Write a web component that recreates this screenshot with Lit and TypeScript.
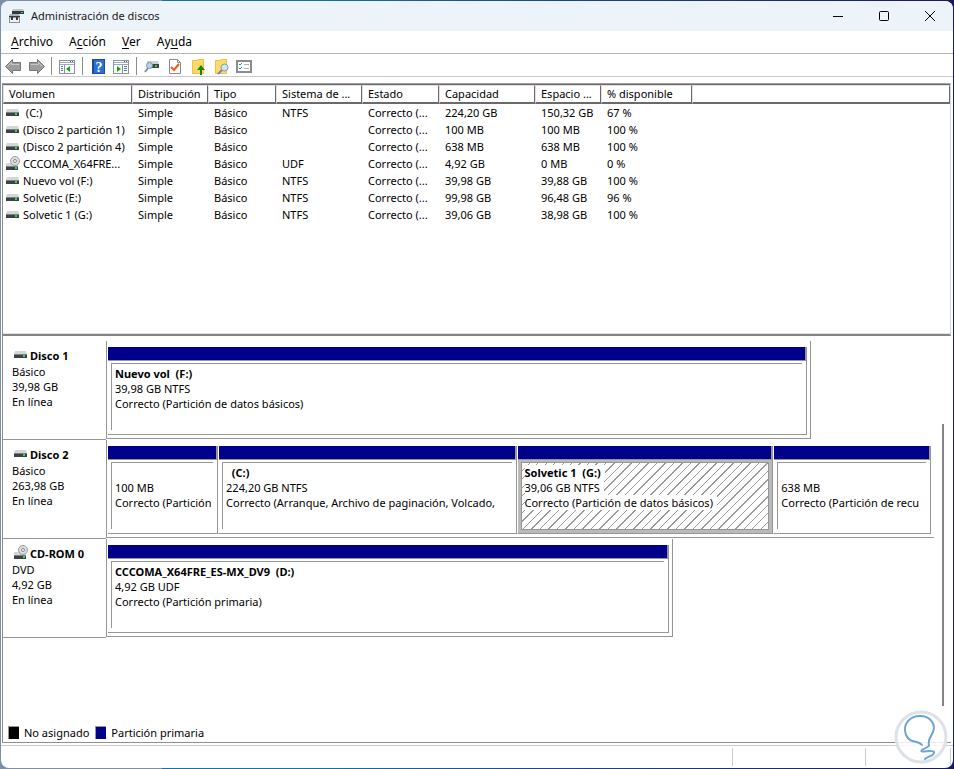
import { LitElement, html, css, svg, nothing } from "lit";
import { customElement, property, state } from "lit/decorators.js";
import { classMap } from "lit/directives/class-map.js";
import { styleMap } from "lit/directives/style-map.js";

type Kind = "disk" | "optical";

interface Volume {
  name: string;
  kind: Kind;
  fs: string;
  capacity: string;
  free: string;
  percent: string;
}

interface Partition {
  id: string;
  name: string;
  size: string;
  status: string;
  share: number;
}

interface Disk {
  name: string;
  type: string;
  size: string;
  kind: Kind;
  width: number;
  full: boolean;
  partitions: Partition[];
}

const HEADERS = ["Volumen", "Distribución", "Tipo", "Sistema de ...", "Estado", "Capacidad", "Espacio ...", "% disponible"];

const VOLUMES: Volume[] = [
  { name: "\u00a0(C:)", kind: "disk", fs: "NTFS", capacity: "224,20 GB", free: "150,32 GB", percent: "67 %" },
  { name: "(Disco 2 partición 1)", kind: "disk", fs: "", capacity: "100 MB", free: "100 MB", percent: "100 %" },
  { name: "(Disco 2 partición 4)", kind: "disk", fs: "", capacity: "638 MB", free: "638 MB", percent: "100 %" },
  { name: "CCCOMA_X64FRE...", kind: "optical", fs: "UDF", capacity: "4,92 GB", free: "0 MB", percent: "0 %" },
  { name: "Nuevo vol (F:)", kind: "disk", fs: "NTFS", capacity: "39,98 GB", free: "39,88 GB", percent: "100 %" },
  { name: "Solvetic (E:)", kind: "disk", fs: "NTFS", capacity: "99,98 GB", free: "96,48 GB", percent: "96 %" },
  { name: "Solvetic 1 (G:)", kind: "disk", fs: "NTFS", capacity: "39,06 GB", free: "38,98 GB", percent: "100 %" },
];

const DISKS: Disk[] = [
  {
    name: "Disco 1", type: "Básico", size: "39,98 GB", kind: "disk", width: 85.1, full: false,
    partitions: [
      { id: "f", name: "Nuevo vol\u00a0 (F:)", size: "39,98 GB NTFS", status: "Correcto (Partición de datos básicos)", share: 1 },
    ],
  },
  {
    name: "Disco 2", type: "Básico", size: "263,98 GB", kind: "disk", width: 100, full: true,
    partitions: [
      { id: "p1", name: "", size: "100 MB", status: "Correcto (Partición", share: 110 },
      { id: "c", name: "\u00a0 (C:)", size: "224,20 GB NTFS", status: "Correcto (Arranque, Archivo de paginación, Volcado,", share: 299 },
      { id: "g", name: "Solvetic 1\u00a0 (G:)", size: "39,06 GB NTFS", status: "Correcto (Partición de datos básicos)", share: 257 },
      { id: "p4", name: "", size: "638 MB", status: "Correcto (Partición de recu", share: 157 },
    ],
  },
  {
    name: "CD-ROM 0", type: "DVD", size: "4,92 GB", kind: "optical", width: 68.5, full: false,
    partitions: [
      { id: "d", name: "CCCOMA_X64FRE_ES-MX_DV9\u00a0 (D:)", size: "4,92 GB UDF", status: "Correcto (Partición primaria)", share: 1 },
    ],
  },
];

const diskIcon = html`<svg viewBox="0 0 16 16" width="16" height="16" aria-hidden="true">
  <path d="M2 4h11l1 3H1z" fill="#d3d6d9"/>
  <rect x="1" y="7" width="13" height="4" fill="#3d4247"/>
  <rect x="1" y="7" width="13" height="1" fill="#7e8286"/>
  <rect x="10" y="8" width="2" height="2" fill="#22e052"/>
</svg>`;

const opticalIcon = html`<svg viewBox="0 0 16 16" width="16" height="16" aria-hidden="true">
  <rect x="1" y="7" width="12" height="3" fill="#d3d6d9"/>
  <rect x="1" y="10" width="12" height="4" fill="#3d4247"/>
  <rect x="1" y="10" width="12" height="1" fill="#7e8286"/>
  <rect x="10" y="11" width="2" height="2" fill="#22e052"/>
  <circle cx="10" cy="5" r="4.500" fill="#dcdee0" stroke="#989ca0"/>
  <circle cx="10" cy="5" r="1.500" fill="#fff" stroke="#85898d"/>
</svg>`;

const appIcon = html`<svg viewBox="0 0 17 17" width="17" height="17" aria-hidden="true">
  <path d="M5 1h10l1 2H4z" fill="#c3c6c9"/>
  <rect x="4" y="3" width="12" height="3" fill="#34393d"/>
  <rect x="13" y="4" width="2" height="1" fill="#22e052"/>
  <path d="M2 6h9l1 2H1z" fill="#aeb1b4"/>
  <rect x="1" y="8" width="11" height="2" fill="#3a3f43"/>
  <rect x="1.500" y="9.500" width="10" height="5" fill="#f1f1f1" stroke="#8a8d90"/>
  <rect x="3" y="9" width="2" height="3" fill="#34393d"/>
  <rect x="8" y="9" width="2" height="3" fill="#34393d"/>
</svg>`;

const icon = (body: unknown) => html`<svg viewBox="0 0 17 17" width="17" height="17" aria-hidden="true">${body}</svg>`;

const ICONS = {
  back: icon(svg`<path d="M.5 8.500 7.500 1.500v3h8v8h-8v3z" fill="#9d9d9d" stroke="#777"/><path d="M2.500 8.500 6.500 4.500v2h8" fill="none" stroke="#c6c6c6"/>`),
  forward: icon(svg`<path d="M16.500 8.500 9.500 1.500v3h-8v8h8v3z" fill="#9d9d9d" stroke="#777"/><path d="M2.500 6.500h8v-2l4 4" fill="none" stroke="#c6c6c6"/>`),
  tree: icon(svg`<rect x=".5" y="2.500" width="15" height="13" fill="#fff" stroke="#8a929a"/><path d="M1 4.500h14M1 6.500h14" stroke="#a3aab1"/><path d="M11 3.500h1M13 3.500h1" stroke="#2f6fb5"/><path d="M5.500 7v8" stroke="#8a929a"/><path d="M2 8.500h2M2 10.500h2M2 12.500h2" stroke="#3f7fb9"/><path d="M11 8v6L7 11z" fill="#18a018"/>`),
  help: icon(svg`<rect x="2" y="1" width="13" height="15" fill="#2d6fd2"/><path d="M2 1h2v15H2z" fill="#174797"/><rect x="2.500" y="1.500" width="12" height="14" fill="none" stroke="#1b4fa0"/><text x="9" y="14" text-anchor="middle" class="mark">?</text>`),
  panel: icon(svg`<rect x=".5" y="2.500" width="15" height="13" fill="#fff" stroke="#8a929a"/><path d="M1 4.500h14M1 6.500h14" stroke="#a3aab1"/><path d="M11 3.500h1M13 3.500h1" stroke="#2f6fb5"/><path d="M9.500 7v8" stroke="#8a929a"/><path d="M11 8.500h3M11 10.500h3M11 12.500h3" stroke="#3f7fb9"/><path d="M4 8v6l4-3z" fill="#18a018"/>`),
  rescan: icon(svg`<path d="M3 3h11l1 3H3z" fill="#cdd0d3"/><rect x="3" y="6" width="12" height="4" fill="#3d4247"/><rect x="11" y="7" width="2" height="2" fill="#22e052"/><circle cx="5.500" cy="7.500" r="3" fill="#b5d4ee" stroke="#7793ad"/><path d="M4 10 1 14" stroke="#7793ad" stroke-width="2"/>`),
  check: icon(svg`<path d="M2.500 1.500h8l3 3v11h-11z" fill="#fff" stroke="#8a8a8a"/><path d="M10.500 1.500v3h3" fill="none" stroke="#8a8a8a"/><path d="m4 9 3 3 5-6" fill="none" stroke="#ef5a1c" stroke-width="2"/>`),
  folderUp: icon(svg`<path d="M2 2h5l1-1h6v15H2z" fill="#ffd968"/><path d="M2.500 2.500h5l1-1h5v14h-11z" fill="none" stroke="#f0c14a"/><path d="m11 7 4 5h-3v5h-2v-5H7z" fill="#128a12"/>`),
  folderSearch: icon(svg`<path d="M2 2h5l1-1h6v15H2z" fill="#ffd968"/><path d="M2.500 2.500h5l1-1h5v14h-11z" fill="none" stroke="#f0c14a"/><path d="m9 12-4 4" stroke="#6f8ea9" stroke-width="2"/><circle cx="11.500" cy="9.500" r="3.500" fill="#cfe4f5" stroke="#7e9cb5"/>`),
  list: icon(svg`<rect x="1" y="3" width="14" height="11" fill="#fff" stroke="#8c8c8c" stroke-width="2"/><path d="m3 6 1 1 2-2M3 10l1 1 2-2" fill="none" stroke="#2b7fd0"/><path d="M8 6.500h5M8 10.500h5" stroke="#b0b0b0"/>`),
};

const TOOLS = [
  [["Atrás", ICONS.back], ["Adelante", ICONS.forward]],
  [["Mostrar árbol de consola", ICONS.tree]],
  [["Ayuda", ICONS.help], ["Mostrar panel de acciones", ICONS.panel]],
  [["Volver a examinar", ICONS.rescan], ["Propiedades", ICONS.check], ["Subir", ICONS.folderUp], ["Buscar", ICONS.folderSearch], ["Configuración", ICONS.list]],
] as const;

const MENUS = [["", "A", "rchivo"], ["A", "c", "ción"], ["", "V", "er"], ["Ay", "u", "da"]];

const base = css`
  * { box-sizing: border-box; }
  button { font: inherit; color: inherit; background: none; border: 0; padding: 0; margin: 0; }
  svg { display: block; flex: none; }
`;

@customElement("volume-table")
export class VolumeTable extends LitElement {
  static styles = [base, css`
    :host { display: block; height: 253px; border: 1px solid #a0a0a0; border-bottom: 2px solid #858585; border-right-color: #d8d8d8; border-left: 0; overflow: hidden; }
    .inner { height: 100%; border-top: 1px solid #6a6a6a; border-bottom: 1px solid #e3e3e3; }
    .grid { width: 100%; border-collapse: separate; border-spacing: 0; table-layout: fixed; }
    .head { height: 19px; padding: 0 0 0 5px; text-align: left; font-weight: 400; line-height: 16px; white-space: nowrap; overflow: hidden;
      border: solid; border-width: 1px 1px 2px 1px; border-color: #e6e0e6 #6a6a6a #6a6a6a #e6e0e6; }
    .fill { width: auto; }
    .cell { height: 17px; padding: 0 0 0 6px; line-height: 17px; white-space: nowrap; overflow: hidden; }
    .first { padding-left: 2px; }
    .name { display: flex; align-items: center; gap: 2px; height: 17px; }
    .w0 { width: 129px; } .w1 { width: 76px; } .w2 { width: 68px; } .w3 { width: 86px; }
    .w4 { width: 77px; } .w5 { width: 96px; } .w6 { width: 66px; } .w7 { width: 91px; }
  `];

  render() {
    return html`<div class="inner"><table class="grid">
      <thead><tr>
        ${HEADERS.map((h, i) => html`<th scope="col" class="head w${i}">${h}</th>`)}
        <td class="head fill"></td>
      </tr></thead>
      <tbody>
        ${VOLUMES.map((v) => html`<tr>
          <td class="cell first"><span class="name">${v.kind === "disk" ? diskIcon : opticalIcon}<span>${v.name}</span></span></td>
          ${["Simple", "Básico", v.fs, "Correcto (...", v.capacity, v.free, v.percent].map((t) => html`<td class="cell">${t}</td>`)}
        </tr>`)}
      </tbody>
    </table></div>`;
  }
}

@customElement("disk-row")
export class DiskRow extends LitElement {
  @property({ attribute: false }) disk!: Disk;
  @property() selected = "";

  static styles = [base, css`
    :host { display: flex; height: 99px; }
    .label { width: 103px; flex: none; padding: 6px 0 0 9px; border-bottom: 1px solid #969696; line-height: 15px; }
    .title { display: flex; align-items: flex-start; gap: 1px; margin: 0; padding-left: 1px; height: 17px; font-size: 11px; line-height: 18px; font-weight: 700; }
    .line { margin: 0; }
    .area { flex: 1; min-width: 0; padding-right: 8px; }
    .track { display: flex; height: 98px; padding: 6px 3px 3px 1px; border: solid #969696; border-width: 0 1px 1px 1px; }
    .track.full { border-right: 0; }
    .part { display: flex; flex-direction: column; flex-basis: 0; min-width: 0; text-align: left; border-right: 1px solid #969696; border-bottom: 1px solid #969696; line-height: 15px; }
    .part + .part { border-left: 1px solid #fff; }
    .strip { display: block; flex: none; padding-right: 1px; background: #969696; }
    .bar { display: block; height: 14px; background: #00008b; border-bottom: 1px solid #969696; }
    .box { display: flex; flex: 1; min-height: 0; padding: 2px 4px 4px 3px; }
    .body { flex: 1; min-width: 0; padding: 2px 0 0 3px; border: solid #969696; border-width: 1px 0 0 1px; overflow: hidden; }
    .part.on .box { padding: 0; border: 3px solid #bababa; border-top-width: 2px; }
    .part.on .body { border-width: 1px; background: repeating-linear-gradient(135deg, #fff 0 5px, #999 5px 6px); }
    .text { display: block; height: 15px; white-space: pre; overflow: hidden; }
    .part.on .text { width: fit-content; background: #fff; padding-right: 4px; }
    .name { font-weight: 700; }
  `];

  private pick(id: string) {
    this.dispatchEvent(new CustomEvent("pick", { detail: id, bubbles: true, composed: true }));
  }

  render() {
    const d = this.disk;
    return html`
      <div class="label">
        <h2 class="title">${d.kind === "disk" ? diskIcon : opticalIcon}<span>${d.name}</span></h2>
        <p class="line">${d.type}</p>
        <p class="line">${d.size}</p>
        <p class="line">En línea</p>
      </div>
      <div class="area">
        <div class=${classMap({ track: true, full: d.full })} style=${styleMap({ width: `${d.width}%` })}>
          ${d.partitions.map((p) => html`
            <button class=${classMap({ part: true, on: p.id === this.selected })} style=${styleMap({ flexGrow: String(p.share) })}
              aria-pressed=${p.id === this.selected} @click=${() => this.pick(p.id)}>
              <span class="strip"><span class="bar"></span></span>
              <span class="box"><span class="body">
                <span class="text name">${p.name || nothing}</span>
                <span class="text">${p.size}</span>
                <span class="text">${p.status}</span>
              </span></span>
            </button>`)}
        </div>
      </div>`;
  }
}

@customElement("app-root")
export class AppRoot extends LitElement {
  @state() private selected = "g";

  static styles = [base, css`
    :host { display: block; min-height: 100vh; padding: 1px; color: #000; font: 11px/15px "Noto Sans", "Open Sans", sans-serif;
      background: linear-gradient(90deg, #7b90a6 0 17%, #1173a8 17% 32%, #17458f 60%, #171a5c); }
    *, :host { box-sizing: border-box; }
    .window { position: relative; display: flex; flex-direction: column; min-height: calc(100vh - 2px); background: #fff; border-radius: 8px; overflow: hidden; }
    .titlebar { display: flex; align-items: center; height: 30px; padding-left: 7px; background: #ecf3f9; }
    .caption { flex: 1; margin: 0 0 0 6px; padding-bottom: 2px; font-size: 11px; font-weight: 400; color: #1a1a1a; }
    .control { display: grid; place-items: center; width: 46px; height: 28px; }
    .menu { display: flex; align-items: flex-start; height: 23px; padding-left: 2px; font-size: 12px; border-bottom: 1px solid #b4b4b4; }
    .item { padding: 0 8px; height: 20px; }
    .key { text-decoration: underline; text-underline-offset: 2px; }
    .toolbar { display: flex; align-items: center; height: 23px; padding: 2px 0 0 1px; border-bottom: 1px solid #cbcbcb; }
    .group { display: flex; align-items: center; }
    .group + .group::before { content: ""; width: 1px; height: 18px; margin: 0 4px 0 3px; background: #8c8c8c; }
    .tool { display: grid; place-items: center; width: 23px; height: 20px; }
    .mark { font: 700 14px "Liberation Serif", serif; fill: #fff; }
    .content { display: flex; flex-direction: column; flex: 1; margin: 6px 2px 0 1px; border-left: 1px solid #8f8f8f; }
    .disks { display: flex; flex: 1; min-height: 0; padding: 5px 7px 0 0; }
    .rows { flex: 1; min-width: 0; }
    .thumb { width: 2px; height: 282px; margin-top: 83px; background: #858585; }
    .legend { display: flex; align-items: center; gap: 6px; height: 20px; padding-left: 5px; border-bottom: 1px solid #8f8f8f; }
    .entry { display: flex; align-items: center; gap: 5px; }
    .swatch { width: 11px; height: 13px; border: solid #969696; border-width: 1px 0 0 1px; background: #000; }
    .swatch.primary { background: #00008b; }
    .status { display: flex; justify-content: flex-end; height: 23px; margin-top: 2px; padding: 2px 2px 2px 0; border-top: 1px solid #cbcbcb; }
    .slot { border-right: 1px solid #cbcbcb; }
    .slot.wide { width: 133px; }
    .slot.narrow { width: 85px; }
    .seal { position: absolute; right: 5px; bottom: 3px; }
  `];

  render() {
    return html`<main class="window">
      <header class="titlebar">
        ${appIcon}
        <h1 class="caption">Administración de discos</h1>
        <button class="control" aria-label="Minimizar"><svg width="10" height="10"><path d="M0 5.500h10" stroke="#000"/></svg></button>
        <button class="control" aria-label="Maximizar"><svg width="10" height="10"><rect x=".5" y=".5" width="9" height="9" rx="1" fill="none" stroke="#000"/></svg></button>
        <button class="control" aria-label="Cerrar"><svg width="10" height="10"><path d="m0 0 10 10M10 0 0 10" stroke="#000"/></svg></button>
      </header>
      <nav class="menu">
        ${MENUS.map(([a, k, b]) => html`<button class="item">${a}<span class="key">${k}</span>${b}</button>`)}
      </nav>
      <div class="toolbar" role="toolbar">
        ${TOOLS.map((g) => html`<div class="group">${g.map(([label, glyph]) => html`<button class="tool" aria-label=${label}>${glyph}</button>`)}</div>`)}
      </div>
      <section class="content">
        <volume-table></volume-table>
        <div class="disks" @pick=${(e: CustomEvent<string>) => (this.selected = e.detail)}>
          <div class="rows">${DISKS.map((d) => html`<disk-row .disk=${d} .selected=${this.selected}></disk-row>`)}</div>
          <div class="thumb"></div>
        </div>
        <div class="legend">
          <span class="entry"><span class="swatch"></span>No asignado</span>
          <span class="entry"><span class="swatch primary"></span>Partición primaria</span>
        </div>
      </section>
      <footer class="status"><span class="slot"></span><span class="slot wide"></span><span class="slot narrow"></span></footer>
      <svg class="seal" width="54" height="56" viewBox="0 0 54 56" aria-hidden="true">
        <circle cx="27" cy="28" r="25" fill="#fff" fill-opacity=".85" stroke="#dde2ea" stroke-width="3"/>
        <path d="M28 36C24 31 16 35 12 26 8 15 16 7 26 7c11 0 16 9 13 16-3 6-5 8-4 14l-7 4c-4 4 11-1 12 2 1 4-6 4-9 7" fill="none" stroke="#6fa3d4" stroke-width="2" stroke-linecap="round" stroke-linejoin="round"/>
      </svg>
    </main>`;
  }
}
